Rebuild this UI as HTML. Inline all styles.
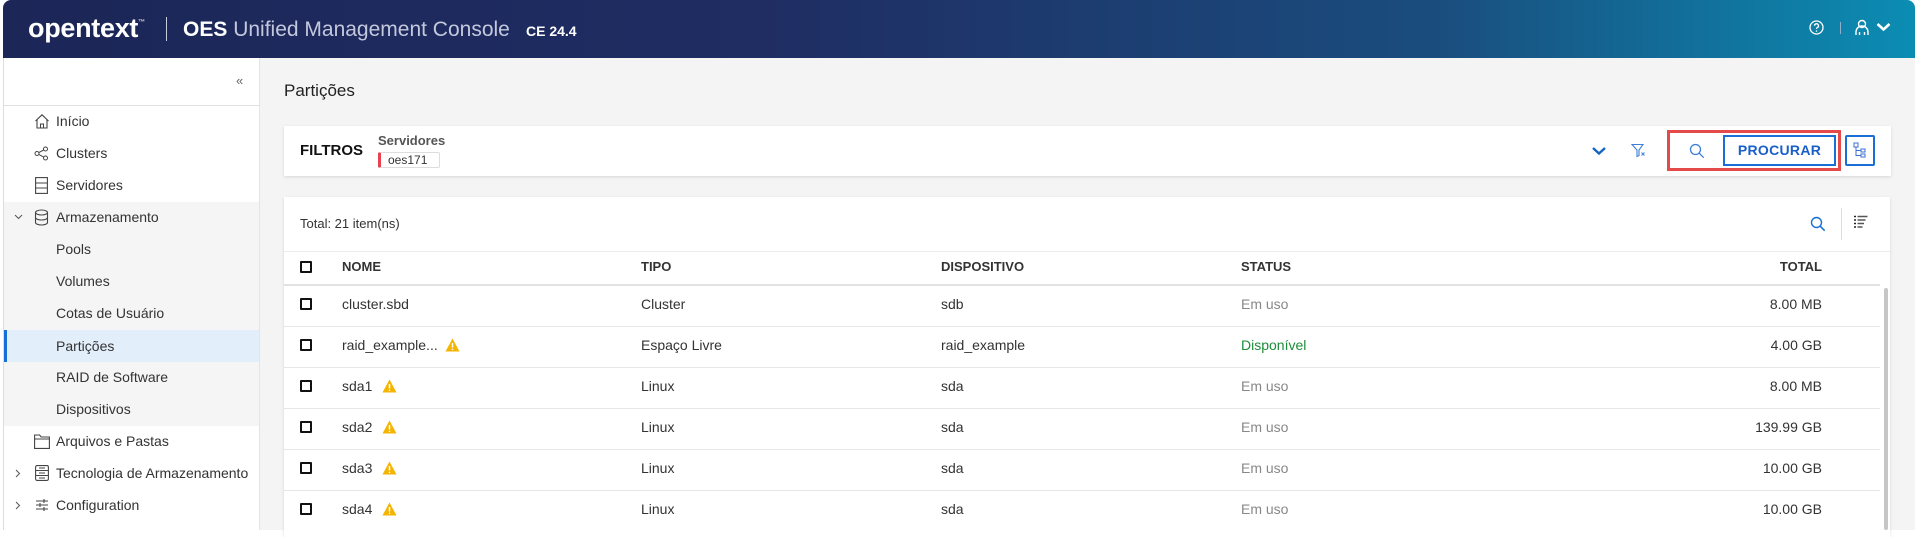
<!DOCTYPE html>
<html><head><meta charset="utf-8"><style>
*{margin:0;padding:0;box-sizing:border-box}
body{width:1919px;height:530px;overflow:hidden;background:#fff;font-family:"Liberation Sans",sans-serif;color:#333;position:relative}
.a{position:absolute;white-space:nowrap}
.hdr{left:3px;top:0;width:1912px;height:58px;border-radius:8px 8px 0 0;background:linear-gradient(90deg,#1c2657 0%,#1f2d63 40%,#1a4d7e 75%,#0b8db3 100%)}
.main{left:3px;top:58px;width:1912px;height:472px;background:#f4f4f4;border-left:1px solid #ddd}
.side{left:4px;top:58px;width:256px;height:472px;background:#fff;border-right:1px solid #e4e4e4}
.mi{font-size:14px;color:#333;transform:translateY(-50%)}
.card{background:#fff;box-shadow:0 1px 3px rgba(0,0,0,.12)}
.th{font-size:13px;font-weight:bold;color:#333;top:259px}
.cb{width:12px;height:12px;border:2px solid #111;border-radius:1px}
.row{left:284px;width:1596px;height:1px;background:#e6e6e6}
.td{font-size:14px;color:#333;transform:translateY(-50%)}
</style></head><body>
<div class="a hdr"></div>
<div class="a" style="left:28px;top:13px;font-size:27px;font-weight:bold;color:#fff;letter-spacing:-0.3px">opentext<span style="font-size:7px;vertical-align:top;position:relative;top:6px;color:#ccc">™</span></div>
<div class="a" style="left:166px;top:17px;width:1px;height:24px;background:#c8cbe0"></div>
<div class="a" style="left:183px;top:18px;font-size:21px;color:#c3c8dc"><b style="color:#fff">OES</b> Unified Management Console</div>
<div class="a" style="left:526px;top:23px;font-size:14px;font-weight:bold;color:#fff">CE 24.4</div>
<svg class="a" style="left:1809px;top:20px" width="15" height="15" viewBox="0 0 15 15"><circle cx="7.5" cy="7.5" r="6.5" fill="none" stroke="#fff" stroke-width="1.3"/><path d="M5.5 5.8a2 2 0 1 1 2.6 1.9c-.5.2-.6.5-.6 1.2" fill="none" stroke="#fff" stroke-width="1.3"/><circle cx="7.5" cy="11" r=".8" fill="#fff"/></svg>
<div class="a" style="left:1840px;top:22px;width:1px;height:12px;background:#8fb0c8"></div>
<svg class="a" style="left:1855px;top:19px" width="14" height="17" viewBox="0 0 14 17"><circle cx="7" cy="5" r="3.5" fill="none" stroke="#fff" stroke-width="1.4"/><path d="M1 16v-3a6 6 0 0 1 12 0v3M4.5 16v-3M9.5 16v-3" fill="none" stroke="#fff" stroke-width="1.4"/></svg>
<svg class="a" style="left:1876px;top:22px" width="15" height="10" viewBox="0 0 15 10"><path d="M1.5 2l6 5.5 6-5.5" fill="none" stroke="#fff" stroke-width="2.6"/></svg>

<div class="a main"></div>
<div class="a side"></div>
<div class="a" style="left:4px;top:105px;width:256px;height:1px;background:#e0e0e0"></div>
<div class="a" style="left:236px;top:73px;font-size:13px;color:#666">«</div>
<div class="a" style="left:4px;top:202px;width:255px;height:224px;background:#f5f5f5"></div>
<div class="a" style="left:4px;top:330px;width:255px;height:32px;background:#e3eefb"></div>
<div class="a" style="left:4px;top:330px;width:3px;height:32px;background:#1a6fd6"></div>

<svg class="a" style="left:34px;top:113px" width="16" height="16" viewBox="0 0 16 16"><path d="M1.5 8L8 1.8 14.5 8M3 6.8V15h10V6.8M6.5 15v-4h3v4" fill="none" stroke="#444" stroke-width="1.1"/></svg>
<svg class="a" style="left:34px;top:146px" width="15" height="15" viewBox="0 0 15 15"><circle cx="3" cy="7.5" r="2" fill="none" stroke="#444"/><circle cx="11.5" cy="3" r="2" fill="none" stroke="#444"/><circle cx="11.5" cy="12" r="2" fill="none" stroke="#444"/><path d="M4.8 6.6L9.7 4M4.8 8.4l4.9 2.7" stroke="#444"/></svg>
<svg class="a" style="left:35px;top:177px" width="13" height="17" viewBox="0 0 13 17"><rect x=".6" y=".6" width="11.8" height="15.8" fill="none" stroke="#444" stroke-width="1.1"/><path d="M.6 6h11.8M.6 11h11.8" stroke="#444" stroke-width="1.1"/></svg>
<svg class="a" style="left:14px;top:213px" width="9" height="8" viewBox="0 0 9 8"><path d="M1 2l3.5 3.5L8 2" fill="none" stroke="#555" stroke-width="1"/></svg>
<svg class="a" style="left:34px;top:209px" width="15" height="17" viewBox="0 0 15 17"><ellipse cx="7.5" cy="3.5" rx="6" ry="2.5" fill="none" stroke="#444" stroke-width="1.1"/><path d="M1.5 3.5v10c0 1.4 2.7 2.5 6 2.5s6-1.1 6-2.5v-10M1.5 8.5c0 1.4 2.7 2.5 6 2.5s6-1.1 6-2.5" fill="none" stroke="#444" stroke-width="1.1"/></svg>
<svg class="a" style="left:34px;top:434px" width="16" height="15" viewBox="0 0 16 15"><path d="M.6 1h5l1.5 2h8.3v11.4H.6zM.6 5h14.8" fill="none" stroke="#444" stroke-width="1.1"/></svg>
<svg class="a" style="left:14px;top:469px" width="8" height="9" viewBox="0 0 8 9"><path d="M2 1l3.5 3.5L2 8" fill="none" stroke="#555"/></svg>
<svg class="a" style="left:35px;top:465px" width="14" height="16" viewBox="0 0 14 16"><rect x=".6" y=".6" width="12.8" height="14.8" rx="1.5" fill="none" stroke="#444" stroke-width="1.1"/><path d="M.6 5.5h12.8M.6 10.5h12.8M4 3h6M4 8h6M4 13h6" stroke="#444" stroke-width="1"/></svg>
<svg class="a" style="left:14px;top:501px" width="8" height="9" viewBox="0 0 8 9"><path d="M2 1l3.5 3.5L2 8" fill="none" stroke="#555"/></svg>
<svg class="a" style="left:35px;top:498px" width="14" height="14" viewBox="0 0 14 14"><path d="M1 3h12M1 7h12M1 11h12M9 1v4M5 5v4M9 9v4" stroke="#444" stroke-width="1.1"/></svg>

<div class="a mi" style="left:56px;top:121px">Início</div>
<div class="a mi" style="left:56px;top:153px">Clusters</div>
<div class="a mi" style="left:56px;top:185px">Servidores</div>
<div class="a mi" style="left:56px;top:217px">Armazenamento</div>
<div class="a mi" style="left:56px;top:249px">Pools</div>
<div class="a mi" style="left:56px;top:281px">Volumes</div>
<div class="a mi" style="left:56px;top:313px">Cotas de Usuário</div>
<div class="a mi" style="left:56px;top:346px">Partições</div>
<div class="a mi" style="left:56px;top:377px">RAID de Software</div>
<div class="a mi" style="left:56px;top:409px">Dispositivos</div>
<div class="a mi" style="left:56px;top:441px">Arquivos e Pastas</div>
<div class="a mi" style="left:56px;top:473px">Tecnologia de Armazenamento</div>
<div class="a mi" style="left:56px;top:505px">Configuration</div>

<div class="a" style="left:284px;top:81px;font-size:17px;color:#222">Partições</div>

<div class="a card" style="left:284px;top:126px;width:1607px;height:50px"></div>
<div class="a" style="left:300px;top:142px;font-size:15px;font-weight:bold;color:#111">FILTROS</div>
<div class="a" style="left:378px;top:133px;font-size:13px;font-weight:bold;color:#555">Servidores</div>
<div class="a" style="left:378px;top:152px;width:62px;height:16px;border:1px solid #ddd;border-left:3px solid #e8414f;border-radius:2px;font-size:12px;color:#333;padding-left:7px;line-height:14px">oes171</div>
<svg class="a" style="left:1591px;top:146px" width="16" height="10" viewBox="0 0 16 10"><path d="M2 2l6 5.5 6-5.5" fill="none" stroke="#1565c0" stroke-width="2.4"/></svg>
<svg class="a" style="left:1631px;top:143px" width="15" height="15" viewBox="0 0 15 15"><path d="M1 1.5h11L8 7v5.5L6 13.5V7z" fill="none" stroke="#3f7fd8" stroke-width="1.1"/><path d="M10.5 9.5l3 3M13.5 9.5l-3 3" stroke="#3f7fd8"/></svg>
<div class="a" style="left:1667px;top:130px;width:174px;height:41px;border:3px solid #e54a4a"></div>
<svg class="a" style="left:1689px;top:143px" width="16" height="16" viewBox="0 0 16 16"><circle cx="6.5" cy="6.5" r="5" fill="none" stroke="#3b7dd8" stroke-width="1.3"/><path d="M10.2 10.2l4.5 4.5" stroke="#3b7dd8" stroke-width="1.3"/></svg>
<div class="a" style="left:1723px;top:135px;width:113px;height:31px;border:2px solid #1a6fd6;color:#1a5fc8;font-size:14px;font-weight:bold;text-align:center;line-height:27px;letter-spacing:.3px">PROCURAR</div>
<div class="a" style="left:1845px;top:135px;width:30px;height:31px;border:2px solid #1a6fd6;border-radius:2px"></div>
<svg class="a" style="left:1853px;top:142px" width="14" height="16" viewBox="0 0 14 16"><rect x="1" y="1" width="4" height="4" fill="none" stroke="#3b6fd0"/><rect x="8" y="7" width="4" height="3" fill="none" stroke="#3b6fd0"/><rect x="8" y="12" width="4" height="3" fill="none" stroke="#3b6fd0"/><path d="M3 5v8.5h5M3 8.5h5" fill="none" stroke="#3b6fd0"/></svg>

<div class="a card" style="left:284px;top:197px;width:1606px;height:340px"></div>
<div class="a" style="left:300px;top:216px;font-size:13px;color:#333">Total: 21 item(ns)</div>
<svg class="a" style="left:1810px;top:216px" width="16" height="16" viewBox="0 0 16 16"><circle cx="6.5" cy="6.5" r="5" fill="none" stroke="#1a6fd6" stroke-width="1.4"/><path d="M10.2 10.2l4.5 4.5" stroke="#1a6fd6" stroke-width="1.5"/></svg>
<div class="a" style="left:1841px;top:208px;width:1px;height:32px;background:#ddd"></div>
<svg class="a" style="left:1853px;top:215px" width="15" height="14" viewBox="0 0 15 14"><path d="M1 1.5h2M1 5h2M1 8.5h2M1 12h2" stroke="#222" stroke-width="1.6"/><path d="M4.5 1.5h10M4.5 5h8M4.5 8.5h6.5M4.5 12h5" stroke="#555" stroke-width="1.6"/></svg>
<div class="a row" style="top:251px;width:1606px;background:#ececec"></div>

<div class="a cb" style="left:300px;top:261px"></div>
<div class="a th" style="left:342px">NOME</div>
<div class="a th" style="left:641px">TIPO</div>
<div class="a th" style="left:941px">DISPOSITIVO</div>
<div class="a th" style="left:1241px">STATUS</div>
<div class="a th" style="left:1772px;width:50px;text-align:right">TOTAL</div>
<div class="a row" style="top:284px;height:2px;background:#e2e2e2"></div>
<div class="a" style="left:1884px;top:288px;width:4px;height:242px;background:#c6c6c6;border-radius:2px"></div>

<div class="a cb" style="left:300px;top:298px"></div>
<div class="a td" style="left:342px;top:304px">cluster.sbd</div>
<div class="a td" style="left:641px;top:304px">Cluster</div>
<div class="a td" style="left:941px;top:304px">sdb</div>
<div class="a td" style="left:1241px;top:304px;color:#888">Em uso</div>
<div class="a td" style="left:1722px;top:304px;width:100px;text-align:right">8.00 MB</div>
<div class="a row" style="top:326px"></div>

<div class="a cb" style="left:300px;top:339px"></div>
<div class="a td" style="left:342px;top:345px">raid_example...</div>
<svg class="a" style="left:445px;top:338px" width="15" height="14" viewBox="0 0 15 14"><path d="M7.5.5L14.5 13.5H.5z" fill="#f5b400"/><path d="M7.5 5v4.5" stroke="#fff" stroke-width="1.5"/><circle cx="7.5" cy="11.3" r=".8" fill="#fff"/></svg>
<div class="a td" style="left:641px;top:345px">Espaço Livre</div>
<div class="a td" style="left:941px;top:345px">raid_example</div>
<div class="a td" style="left:1241px;top:345px;color:#1e8c3a">Disponível</div>
<div class="a td" style="left:1722px;top:345px;width:100px;text-align:right">4.00 GB</div>
<div class="a row" style="top:367px"></div>

<div class="a cb" style="left:300px;top:380px"></div>
<div class="a td" style="left:342px;top:386px">sda1</div>
<svg class="a" style="left:382px;top:379px" width="15" height="14" viewBox="0 0 15 14"><path d="M7.5.5L14.5 13.5H.5z" fill="#f5b400"/><path d="M7.5 5v4.5" stroke="#fff" stroke-width="1.5"/><circle cx="7.5" cy="11.3" r=".8" fill="#fff"/></svg>
<div class="a td" style="left:641px;top:386px">Linux</div>
<div class="a td" style="left:941px;top:386px">sda</div>
<div class="a td" style="left:1241px;top:386px;color:#888">Em uso</div>
<div class="a td" style="left:1722px;top:386px;width:100px;text-align:right">8.00 MB</div>
<div class="a row" style="top:408px"></div>

<div class="a cb" style="left:300px;top:421px"></div>
<div class="a td" style="left:342px;top:427px">sda2</div>
<svg class="a" style="left:382px;top:420px" width="15" height="14" viewBox="0 0 15 14"><path d="M7.5.5L14.5 13.5H.5z" fill="#f5b400"/><path d="M7.5 5v4.5" stroke="#fff" stroke-width="1.5"/><circle cx="7.5" cy="11.3" r=".8" fill="#fff"/></svg>
<div class="a td" style="left:641px;top:427px">Linux</div>
<div class="a td" style="left:941px;top:427px">sda</div>
<div class="a td" style="left:1241px;top:427px;color:#888">Em uso</div>
<div class="a td" style="left:1722px;top:427px;width:100px;text-align:right">139.99 GB</div>
<div class="a row" style="top:449px"></div>

<div class="a cb" style="left:300px;top:462px"></div>
<div class="a td" style="left:342px;top:468px">sda3</div>
<svg class="a" style="left:382px;top:461px" width="15" height="14" viewBox="0 0 15 14"><path d="M7.5.5L14.5 13.5H.5z" fill="#f5b400"/><path d="M7.5 5v4.5" stroke="#fff" stroke-width="1.5"/><circle cx="7.5" cy="11.3" r=".8" fill="#fff"/></svg>
<div class="a td" style="left:641px;top:468px">Linux</div>
<div class="a td" style="left:941px;top:468px">sda</div>
<div class="a td" style="left:1241px;top:468px;color:#888">Em uso</div>
<div class="a td" style="left:1722px;top:468px;width:100px;text-align:right">10.00 GB</div>
<div class="a row" style="top:490px"></div>

<div class="a cb" style="left:300px;top:503px"></div>
<div class="a td" style="left:342px;top:509px">sda4</div>
<svg class="a" style="left:382px;top:502px" width="15" height="14" viewBox="0 0 15 14"><path d="M7.5.5L14.5 13.5H.5z" fill="#f5b400"/><path d="M7.5 5v4.5" stroke="#fff" stroke-width="1.5"/><circle cx="7.5" cy="11.3" r=".8" fill="#fff"/></svg>
<div class="a td" style="left:641px;top:509px">Linux</div>
<div class="a td" style="left:941px;top:509px">sda</div>
<div class="a td" style="left:1241px;top:509px;color:#888">Em uso</div>
<div class="a td" style="left:1722px;top:509px;width:100px;text-align:right">10.00 GB</div>
</body></html>
